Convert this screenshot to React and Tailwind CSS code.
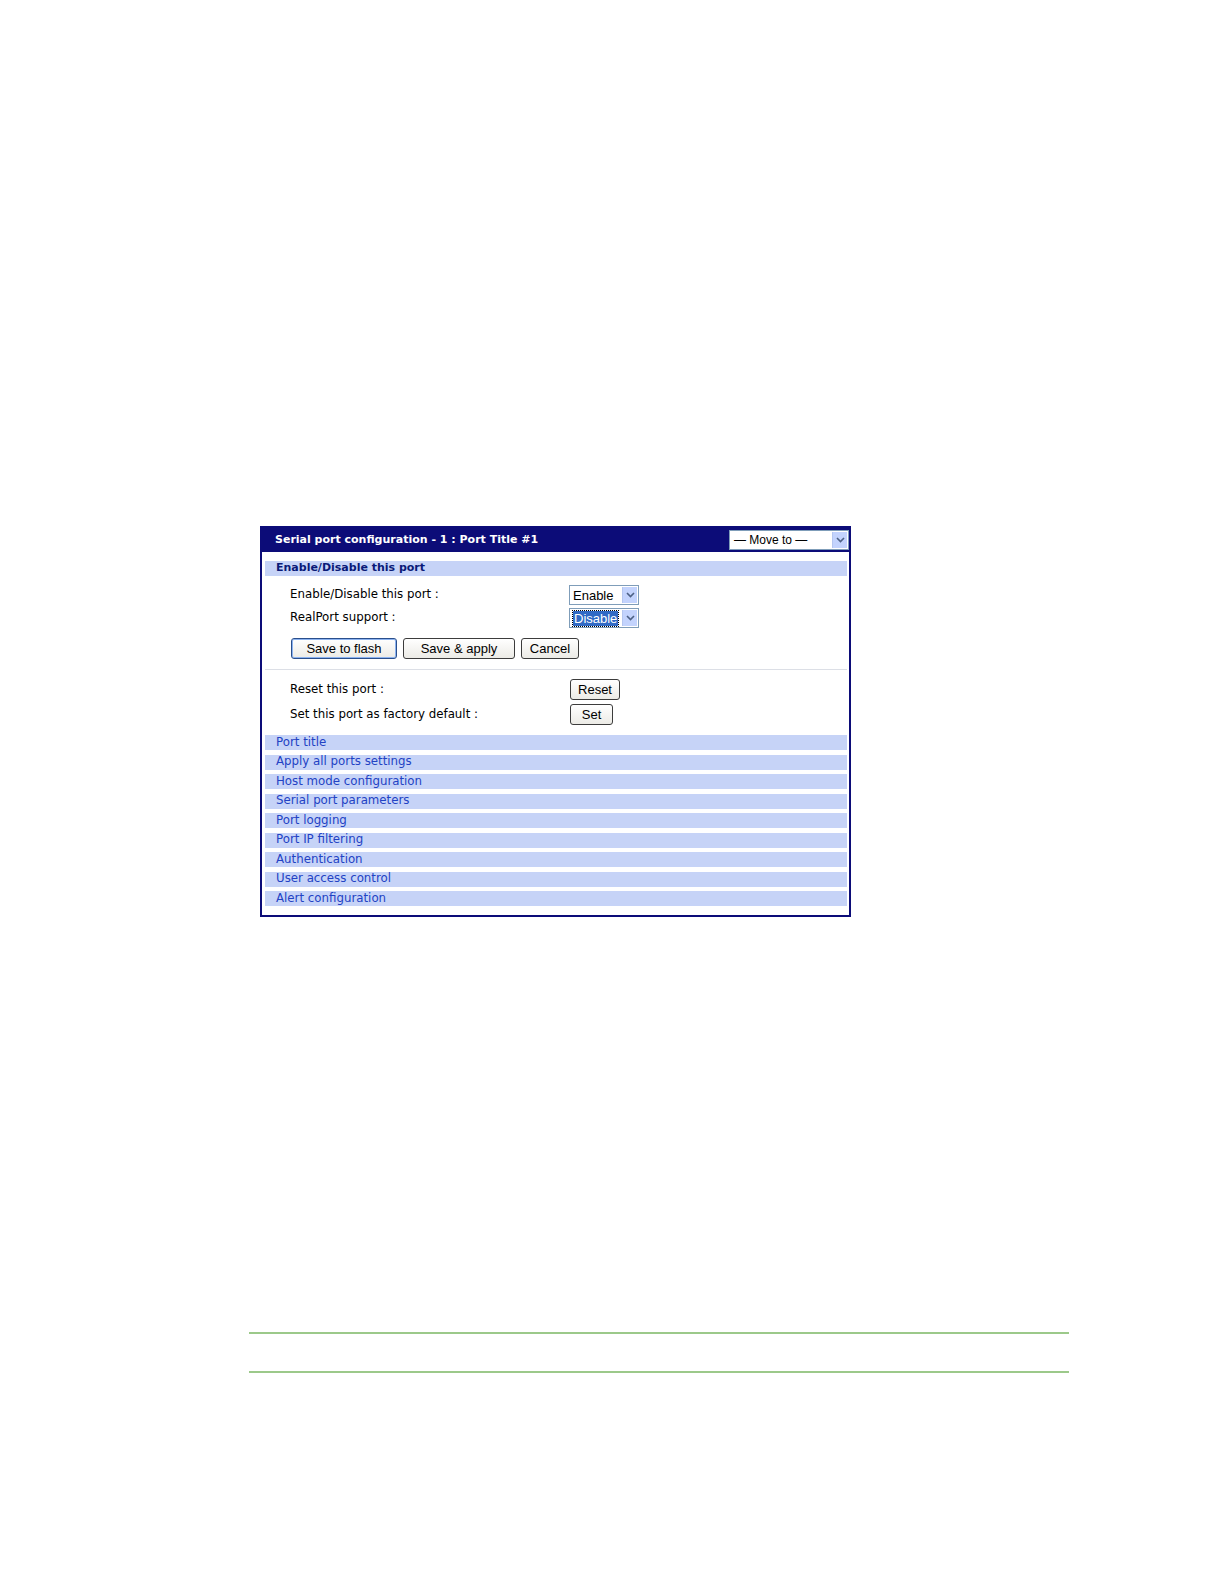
import React from 'react';

const sections = [
  'Port title',
  'Apply all ports settings',
  'Host mode configuration',
  'Serial port parameters',
  'Port logging',
  'Port IP filtering',
  'Authentication',
  'User access control',
  'Alert configuration',
];

const ui = { fontFamily: '"DejaVu Sans", Verdana, sans-serif' };
const btnFont = { fontFamily: '"Liberation Sans", Arial, sans-serif' };

function Arrow() {
  return (
    <span className="flex h-full w-[15px] items-center justify-center bg-[#c3d3fd] border-l border-[#b4c6f0]">
      <svg width="9" height="6" viewBox="0 0 9 6">
        <path d="M1 1 L4.5 4.5 L8 1" fill="none" stroke="#4d6185" strokeWidth="1.6" />
      </svg>
    </span>
  );
}

function Select({ value, selected, width = 'w-[70px]' }) {
  return (
    <div className={`${width} h-[20px] flex items-stretch border border-[#7f9db9] bg-white p-[1px]`}>
      <div className="flex-1 flex items-center pl-[2px]">
        {selected ? (
          <span className="bg-[#316ac5] text-white px-[1px] outline outline-1 outline-dotted outline-[#000] text-[13px] leading-[15px]" style={btnFont}>
            {value}
          </span>
        ) : (
          <span className="text-[13px] leading-[15px] text-black" style={btnFont}>{value}</span>
        )}
      </div>
      <Arrow />
    </div>
  );
}

function Button({ children, width, primary }) {
  return (
    <div
      className={`${width} h-[21px] flex items-center justify-center rounded-[3px] border ${primary ? 'border-[#2a4f8c] shadow-[inset_0_0_0_1px_#8cb3f0]' : 'border-[#3c3c3c]'} bg-gradient-to-b from-white to-[#ecebe6] text-[13px] text-black`}
      style={btnFont}
    >
      {children}
    </div>
  );
}

export default function App() {
  return (
    <div className="w-[1224px] h-[1584px] bg-white overflow-hidden" style={ui}>
      <div className="pt-[526px] pl-[260px]">
        <div className="w-[591px] border-2 border-[#0c0c78] bg-white">
          {/* Title bar */}
          <div className="h-[24px] bg-[#0c0c78] flex items-center justify-between pl-[13px]">
            <span className="text-white font-bold text-[11px]">
              Serial port configuration - 1 : Port Title #1
            </span>
            <div className="w-[120px] h-[20px] flex items-stretch bg-white border border-[#7f9db9] p-[1px]">
              <div className="flex-1 flex items-center pl-[3px] text-[12px] text-black" style={btnFont}>
                — Move to —
              </div>
              <Arrow />
            </div>
          </div>

          <div className="pl-[3px] pr-[2px] pt-[9px] pb-[9px]">
            <div className="h-[15px] bg-[#c6d3f7] flex items-center pl-[11px] text-[11px] font-bold text-[#0a1a78]">
              Enable/Disable this port
            </div>

            <div className="mt-[9px] flex flex-col gap-[3px] pl-[25px]">
              <div className="flex items-center">
                <span className="w-[279px] text-[11.8px] text-black">Enable/Disable this port :</span>
                <Select value="Enable" />
              </div>
              <div className="flex items-center">
                <span className="w-[279px] text-[11.8px] text-black">RealPort support :</span>
                <Select value="Disable" selected />
              </div>
            </div>

            <div className="mt-[10px] pl-[26px] flex gap-[6px]">
              <Button width="w-[106px]" primary>Save to flash</Button>
              <Button width="w-[112px]">Save &amp; apply</Button>
              <Button width="w-[58px]">Cancel</Button>
            </div>

            <div className="mt-[10px] h-[1px] bg-[#dcdfe6]" />

            <div className="mt-[9px] flex flex-col gap-[4px] pl-[25px]">
              <div className="flex items-center">
                <span className="w-[280px] text-[11.8px] text-black">Reset this port :</span>
                <Button width="w-[50px]">Reset</Button>
              </div>
              <div className="flex items-center">
                <span className="w-[280px] text-[11.8px] text-black">Set this port as factory default :</span>
                <Button width="w-[43px]">Set</Button>
              </div>
            </div>

            <div className="mt-[10px] flex flex-col gap-[4.5px]">
              {sections.map((s) => (
                <div key={s} className="h-[15px] bg-[#c6d3f7] flex items-center pl-[11px] text-[11.8px] text-[#2242c4]">
                  {s}
                </div>
              ))}
            </div>
          </div>
        </div>
      </div>

      <div className="mt-[415px] ml-[249px] w-[820px]">
        <div className="h-[2px] bg-[#9cc98a]" />
        <div className="mt-[37px] h-[2px] bg-[#9cc98a]" />
      </div>
    </div>
  );
}
